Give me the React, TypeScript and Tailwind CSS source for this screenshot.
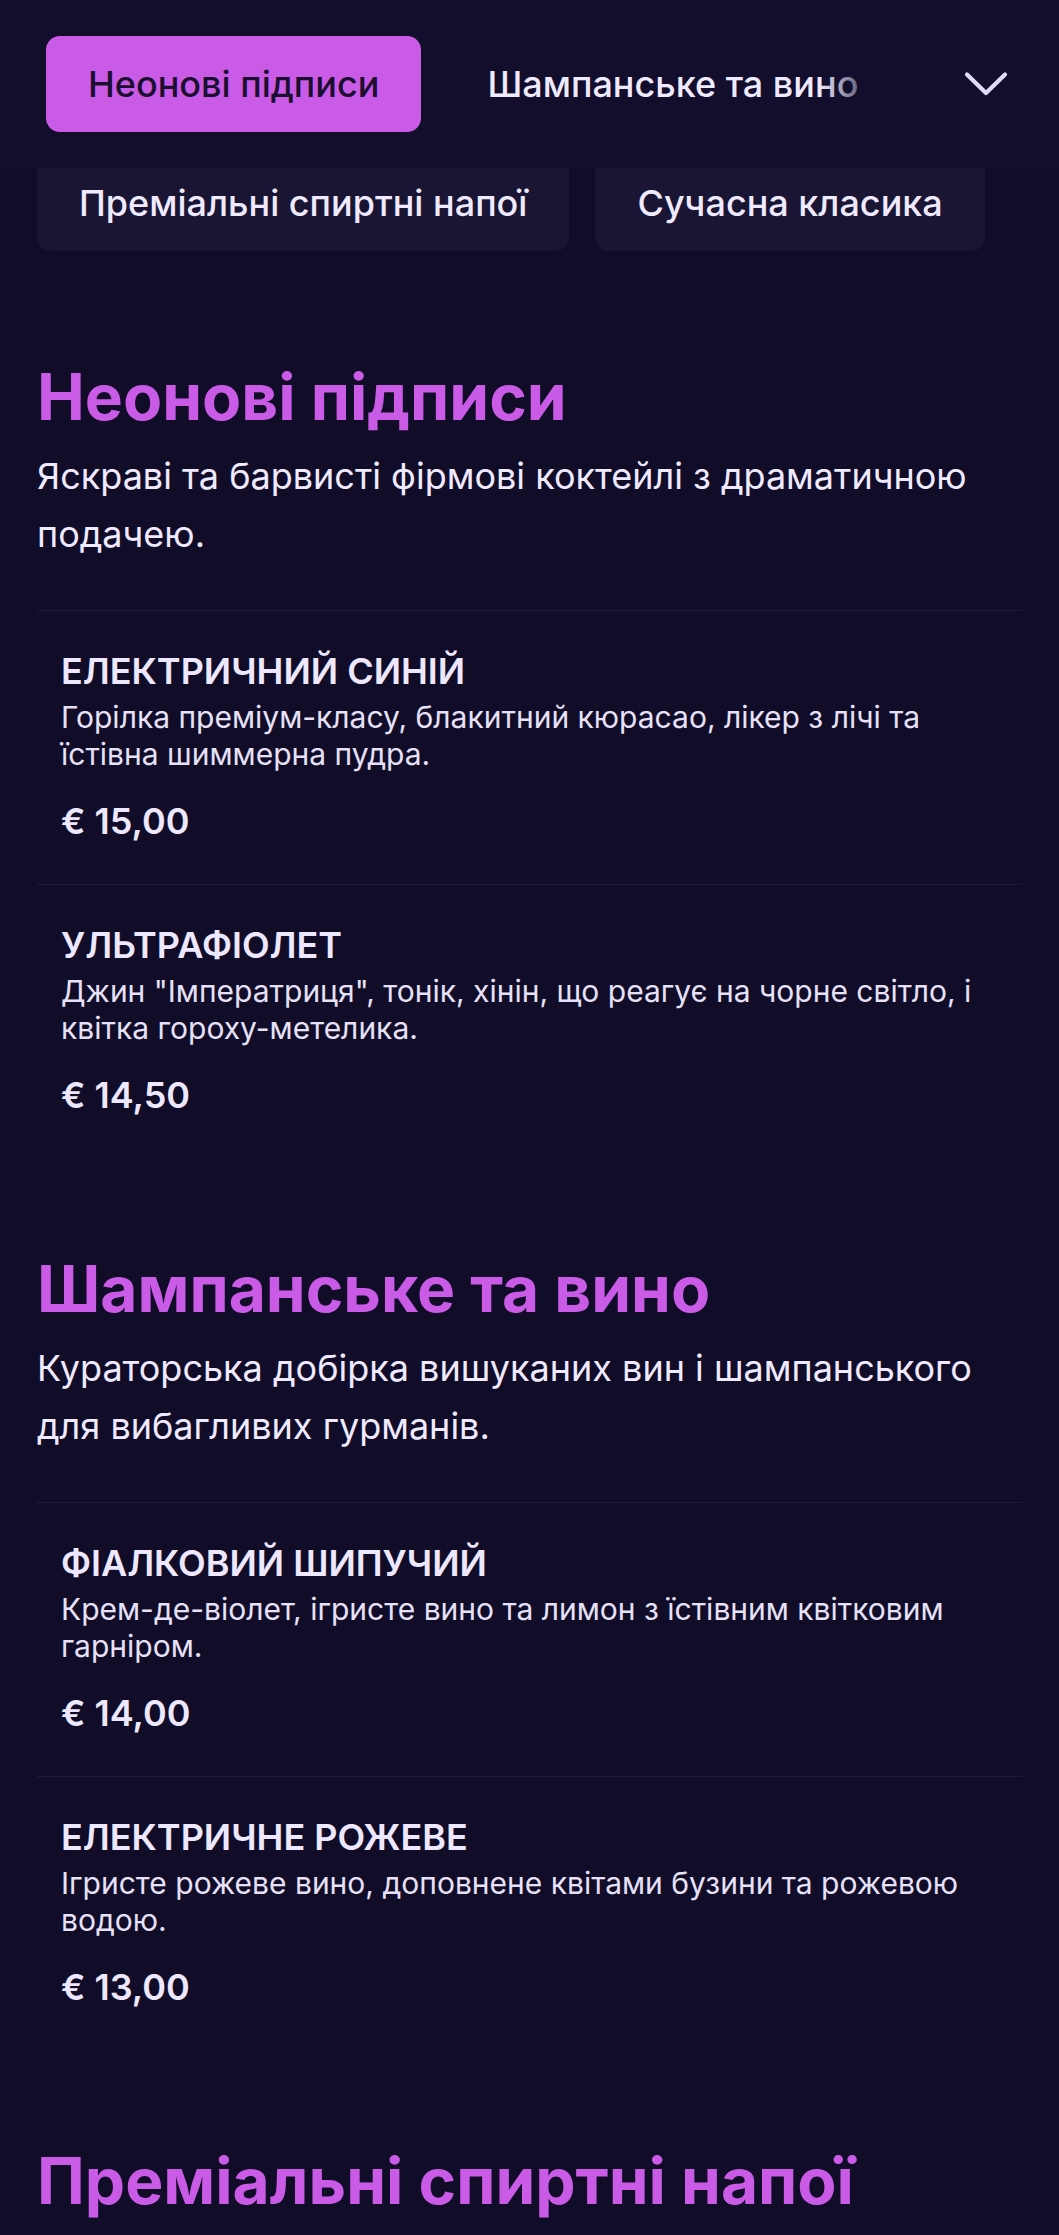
import React from "react";

type Item = { name: string; description: string; price: string };
type Section = { id: string; title: string; description: string; items: Item[] };

const sections: Section[] = [
  {
    id: "neon",
    title: "Неонові підписи",
    description: "Яскраві та барвисті фірмові коктейлі з драматичною подачею.",
    items: [
      { name: "Електричний синій", description: "Горілка преміум-класу, блакитний кюрасао, лікер з лічі та їстівна шиммерна пудра.", price: "€ 15,00" },
      { name: "Ультрафіолет", description: 'Джин "Імператриця", тонік, хінін, що реагує на чорне світло, і квітка гороху-метелика.', price: "€ 14,50" },
    ],
  },
  {
    id: "wine",
    title: "Шампанське та вино",
    description: "Кураторська добірка вишуканих вин і шампанського для вибагливих гурманів.",
    items: [
      { name: "Фіалковий шипучий", description: "Крем-де-віолет, ігристе вино та лимон з їстівним квітковим гарніром.", price: "€ 14,00" },
      { name: "Електричне рожеве", description: "Ігристе рожеве вино, доповнене квітами бузини та рожевою водою.", price: "€ 13,00" },
    ],
  },
  {
    id: "spirits",
    title: "Преміальні спиртні напої",
    description: "Витримані віскі, коньяки та ром для поціновувачів.",
    items: [
      { name: "Односолодовий віскі", description: "Витримка 18 років, подається з кубиком льоду.", price: "€ 18,00" },
      { name: "Коньяк XO", description: "Глибокий смак із нотами ванілі та сухофруктів.", price: "€ 22,00" },
    ],
  },
  {
    id: "classic",
    title: "Сучасна класика",
    description: "Улюблені класичні коктейлі в новому прочитанні.",
    items: [
      { name: "Неоновий негроні", description: "Джин, кампарі, солодкий вермут і апельсинова цедра.", price: "€ 13,50" },
    ],
  },
];

function Chevron() {
  return (
    <svg width="46" height="28" viewBox="0 0 46 28" fill="none">
      <path d="M4 4.5 L23 23 L42 4.5" stroke="#e2dcf7" strokeWidth="4.2" strokeLinecap="round" strokeLinejoin="round" />
    </svg>
  );
}

function MenuItem({ item }: { item: Item }) {
  return (
    <div className="border-t border-[#1f1a3a] px-[24px] pt-[38px] pb-[41px]">
      <h3 className="text-[36px] leading-[44px] font-semibold uppercase text-[#ede8ff]">{item.name}</h3>
      <p className="mt-[6px] text-[30px] leading-[37px] text-[#e6e1f7]">{item.description}</p>
      <div className="mt-[26px] text-[36px] leading-[44px] font-semibold text-[#ede8ff]">{item.price}</div>
    </div>
  );
}

export default function App() {
  const tabs = sections.map((s) => s.title);
  return (
    <div className="min-h-screen bg-[#110d29] font-['Inter','Noto_Sans',sans-serif] text-[#ede8ff]">
      <header className="relative h-[168px] overflow-hidden bg-[#120e2b]">
        <nav className="flex h-full items-center gap-[24px] pl-[46px] whitespace-nowrap">
          {tabs.slice(0, 2).map((t, i) => (
            <button
              key={t}
              className={
                i === 0
                  ? "flex h-[96px] items-center rounded-[14px] bg-[#c95be6] px-[42px] text-[36px] font-medium text-[#1b0f30]"
                  : "flex h-[96px] items-center rounded-[14px] px-[42px] text-[36px] font-medium text-[#efeaff]"
              }
            >
              {t}
            </button>
          ))}
        </nav>
        <div className="absolute right-0 top-0 flex h-full w-[240px] items-center justify-end bg-[linear-gradient(to_right,rgba(18,14,43,0),#120e2b_27%)] pr-[50px]">
          <Chevron />
        </div>
      </header>

      <div className="flex h-[83px] gap-[26px] overflow-hidden px-[37px]">
        {tabs.slice(2).map((t) => (
          <div key={t} className="-mt-[13px] flex h-[96px] shrink-0 items-center rounded-[14px] bg-[#1b1534] px-[42px] text-[36px] font-medium text-[#efeaff] whitespace-nowrap">
            {t}
          </div>
        ))}
      </div>

      <main className="flex flex-col gap-[92px] px-[37px] pt-[107px]">
        {sections.map((s) => (
          <section key={s.id}>
            <h2 className="text-[64px] leading-[77px] font-bold text-[#c95be6]">{s.title}</h2>
            <p className="mt-[12px] text-[36px] leading-[58px] text-[#efeaff]">{s.description}</p>
            <div className="mt-[47px]">
              {s.items.map((it) => (
                <MenuItem key={it.name} item={it} />
              ))}
            </div>
          </section>
        ))}
      </main>
    </div>
  );
}
